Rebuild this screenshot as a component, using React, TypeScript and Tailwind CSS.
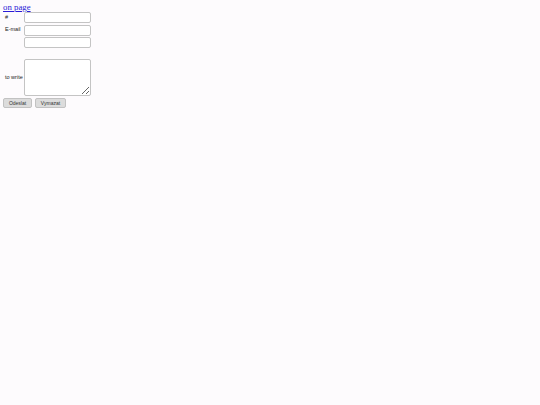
import React from 'react';

/* Small contact form: link on top, label/field grid, two buttons */

const label = "pl-[2px] text-[5.5px] leading-none text-[#222] flex items-center";
const field =
  "w-[67px] h-[11px] border border-[#c4c4c4] rounded-[2px] bg-white outline-none";

export default function App() {
  return (
    <div
      className="w-[540px] h-[405px] bg-[#fdfbfd] px-[3px] pt-[2px]"
      style={{ fontFamily: '"Liberation Sans", Arial, sans-serif' }}
    >
      <a
        href="#"
        className="block w-fit text-[8.8px] leading-[10px] text-[#2a1bd6] underline"
        style={{ fontFamily: '"Liberation Serif", "Times New Roman", serif' }}
      >
        on page
      </a>

      <div className="grid grid-cols-[21px_auto] gap-y-[1.5px] w-fit">
        <span className={label}>#</span>
        <input className={field} />

        <span className={label}>E-mail</span>
        <input className={field} />

        <span className={label}></span>
        <input className={field} />

        <span className={label}></span>
        <div className="h-[8px]" />

        <span className={label}>to write</span>
        <textarea className="w-[67px] h-[37px] border border-[#c4c4c4] rounded-[2px] bg-white outline-none resize-y block" />
      </div>

      <div className="flex gap-[3px] mt-[2px]">
        <button className="w-[29px] h-[10px] bg-[#dcdcdc] border border-[#c2c2c2] rounded-[2px] text-[5px] leading-none text-[#333]">
          Odeslat
        </button>
        <button className="w-[31px] h-[10px] bg-[#dcdcdc] border border-[#c2c2c2] rounded-[2px] text-[5px] leading-none text-[#333]">
          Vymazat
        </button>
      </div>
    </div>
  );
}
